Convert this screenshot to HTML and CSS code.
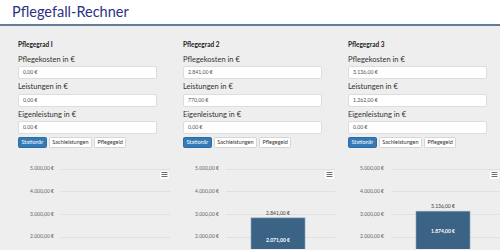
FILE: index.html
```html
<!DOCTYPE html>
<html lang="de">
<head>
    <meta charset="UTF-8">
    <meta name="viewport" content="width=device-width, initial-scale=1.0">
    <title>Pflegefall-Rechner</title>
    <link rel="stylesheet" href="styles.css">
</head>
<body>
    <div class="header">
        <h1>Pflegefall-Rechner</h1>
    </div>

    <div class="content">
        <!-- Pflegegrad 1 -->
        <div class="grade">
            <div class="grade-form">
                <h3>Pflegegrad I</h3>
                <label>Pflegekosten in €</label>
                <div class="input">0,00 €</div>
                <label>Leistungen in €</label>
                <div class="input">0,00 €</div>
                <label>Eigenleistung in €</label>
                <div class="input">0,00 €</div>
                <div class="btn-group">
                    <button class="btn active">Stationär</button>
                    <button class="btn">Sachleistungen</button>
                    <button class="btn">Pflegegeld</button>
                </div>
            </div>
            <svg class="chart" width="165" height="100" viewBox="0 0 165 100">
                <g class="grid">
                    <line x1="56" x2="165" y1="20.5" y2="20.5"/>
                    <line x1="56" x2="165" y1="42.5" y2="42.5"/>
                    <line x1="56" x2="165" y1="65.5" y2="65.5"/>
                    <line x1="56" x2="165" y1="88.5" y2="88.5"/>
                </g>
                <g class="axis">
                    <text x="49" y="20">5.000,00 €</text>
                    <text x="49" y="42.7">4.000,00 €</text>
                    <text x="49" y="65.3">3.000,00 €</text>
                    <text x="49" y="88">2.000,00 €</text>
                </g>
                <g class="menu">
                    <rect x="155" y="22" width="9" height="8" rx="1.5"/>
                    <line x1="156.5" x2="162.5" y1="23.5" y2="23.5"/>
                    <line x1="156.5" x2="162.5" y1="25.5" y2="25.5"/>
                    <line x1="156.5" x2="162.5" y1="27.5" y2="27.5"/>
                </g>
            </svg>
        </div>

        <!-- Pflegegrad 2 -->
        <div class="grade">
            <div class="grade-form">
                <h3>Pflegegrad 2</h3>
                <label>Pflegekosten in €</label>
                <div class="input">2.841,00 €</div>
                <label>Leistungen in €</label>
                <div class="input">770,00 €</div>
                <label>Eigenleistung in €</label>
                <div class="input">0,00 €</div>
                <div class="btn-group">
                    <button class="btn active">Stationär</button>
                    <button class="btn">Sachleistungen</button>
                    <button class="btn">Pflegegeld</button>
                </div>
            </div>
            <svg class="chart" width="165" height="100" viewBox="0 0 165 100">
                <g class="grid">
                    <line x1="56" x2="165" y1="20.5" y2="20.5"/>
                    <line x1="56" x2="165" y1="42.5" y2="42.5"/>
                    <line x1="56" x2="165" y1="65.5" y2="65.5"/>
                    <line x1="56" x2="165" y1="88.5" y2="88.5"/>
                </g>
                <g class="axis">
                    <text x="49" y="20">5.000,00 €</text>
                    <text x="49" y="42.7">4.000,00 €</text>
                    <text x="49" y="65.3">3.000,00 €</text>
                    <text x="49" y="88">2.000,00 €</text>
                </g>
                <rect class="bar" x="81" y="68.9" width="54" height="40"/>
                <text class="bar-total" x="108" y="65">2.841,00 €</text>
                <text class="bar-label" x="108" y="92">2.071,00 €</text>
                <g class="menu">
                    <rect x="155" y="22" width="9" height="8" rx="1.5"/>
                    <line x1="156.5" x2="162.5" y1="23.5" y2="23.5"/>
                    <line x1="156.5" x2="162.5" y1="25.5" y2="25.5"/>
                    <line x1="156.5" x2="162.5" y1="27.5" y2="27.5"/>
                </g>
            </svg>
        </div>

        <!-- Pflegegrad 3 -->
        <div class="grade">
            <div class="grade-form">
                <h3>Pflegegrad 3</h3>
                <label>Pflegekosten in €</label>
                <div class="input">3.136,00 €</div>
                <label>Leistungen in €</label>
                <div class="input">1.262,00 €</div>
                <label>Eigenleistung in €</label>
                <div class="input">0,00 €</div>
                <div class="btn-group">
                    <button class="btn active">Stationär</button>
                    <button class="btn">Sachleistungen</button>
                    <button class="btn">Pflegegeld</button>
                </div>
            </div>
            <svg class="chart" width="165" height="100" viewBox="0 0 165 100">
                <g class="grid">
                    <line x1="56" x2="165" y1="20.5" y2="20.5"/>
                    <line x1="56" x2="165" y1="42.5" y2="42.5"/>
                    <line x1="56" x2="165" y1="65.5" y2="65.5"/>
                    <line x1="56" x2="165" y1="88.5" y2="88.5"/>
                </g>
                <g class="axis">
                    <text x="49" y="20">5.000,00 €</text>
                    <text x="49" y="42.7">4.000,00 €</text>
                    <text x="49" y="65.3">3.000,00 €</text>
                    <text x="49" y="88">2.000,00 €</text>
                </g>
                <rect class="bar" x="81" y="62.2" width="54" height="45"/>
                <text class="bar-total" x="108" y="58">3.136,00 €</text>
                <text class="bar-label" x="108" y="83">1.874,00 €</text>
                <g class="menu">
                    <rect x="155" y="22" width="9" height="8" rx="1.5"/>
                    <line x1="156.5" x2="162.5" y1="23.5" y2="23.5"/>
                    <line x1="156.5" x2="162.5" y1="25.5" y2="25.5"/>
                    <line x1="156.5" x2="162.5" y1="27.5" y2="27.5"/>
                </g>
            </svg>
        </div>
    </div>
</body>
</html>
```

FILE: styles.css
```css
:root {
    --title-color: #2d3184;
    --header-line: #627d95;
    --background-light: #eeeeee;
    --text-color: #333333;
    --border-color: #dddddd;
    --primary: #337ab7;
    --bar-color: #3b6386;
    --white: #ffffff;
}

* {
    margin: 0;
    padding: 0;
    box-sizing: border-box;
}

html, body {
    height: 100%;
    overflow: hidden;
}

body {
    font-family: 'Lato', 'Open Sans', sans-serif;
    background-color: var(--background-light);
    color: var(--text-color);
}

.header {
    height: 26px;
    background: var(--white);
    border-bottom: 2px solid var(--header-line);
    padding-left: 12px;
}

.header h1 {
    font-size: 14.5px;
    font-weight: 400;
    line-height: 24px;
    color: var(--title-color);
}

.content {
    display: flex;
    padding-left: 5px;
}

.grade {
    width: 165px;
    flex-shrink: 0;
}

.grade-form {
    padding: 14px 13px 0 13px;
    display: flex;
    flex-direction: column;
}

.grade-form h3 {
    font-size: 6.5px;
    font-weight: 700;
    line-height: 9px;
    color: #222;
    margin-bottom: 5.5px;
}

.grade-form label {
    font-size: 7.5px;
    line-height: 10px;
    margin-bottom: 1.5px;
}

.input {
    height: 13px;
    background: var(--white);
    border: 1px solid var(--border-color);
    border-radius: 2px;
    font-size: 5.2px;
    line-height: 11px;
    padding-left: 4px;
    color: #555;
    margin-bottom: 3px;
}

.btn-group {
    display: flex;
    gap: 2px;
}

.btn {
    height: 11px;
    font-family: inherit;
    font-size: 5.5px;
    line-height: 9px;
    padding: 0 2.5px;
    background: var(--white);
    color: var(--text-color);
    border: 1px solid #d6d6d6;
    border-radius: 1.5px;
}

.btn.active {
    background: var(--primary);
    border-color: #2e6da4;
    color: var(--white);
}

.chart {
    display: block;
    margin-top: 1px;
    font-family: 'Lato', 'Open Sans', sans-serif;
}

.chart .grid line {
    stroke: #e0e0e0;
    stroke-width: 1;
}

.chart .axis text {
    font-size: 5px;
    fill: #666;
    text-anchor: end;
    dominant-baseline: middle;
}

.chart .bar {
    fill: var(--bar-color);
    stroke: #8aa4bb;
    stroke-width: 0.6;
}

.chart .bar-total {
    font-size: 5px;
    fill: #444;
    text-anchor: middle;
    dominant-baseline: middle;
}

.chart .bar-label {
    font-size: 5px;
    font-weight: 700;
    fill: var(--white);
    text-anchor: middle;
    dominant-baseline: middle;
}

.chart .menu rect {
    fill: var(--white);
}

.chart .menu line {
    stroke: #6e6e6e;
    stroke-width: 1;
}
```
